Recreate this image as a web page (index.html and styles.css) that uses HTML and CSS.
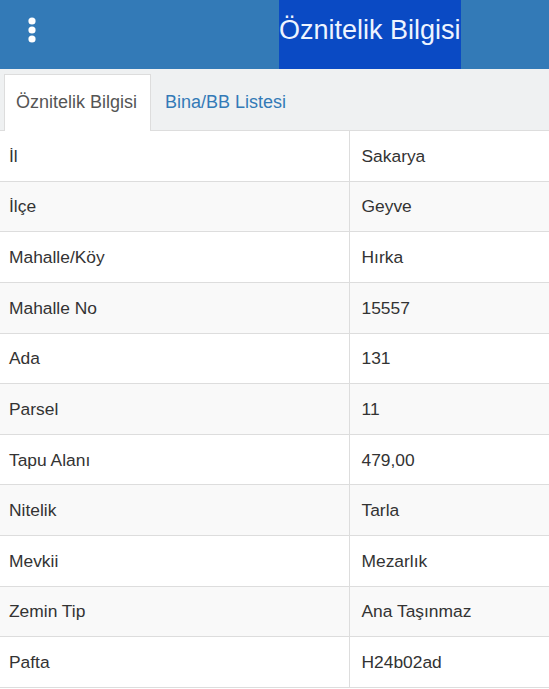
FILE: index.html
```html
<!DOCTYPE html>
<html lang="tr">
<head>
<meta charset="utf-8">
<title>Öznitelik Bilgisi</title>
<link rel="stylesheet" href="styles.css">
</head>
<body>
<header class="topbar">
  <button class="menu" aria-label="Menü">
    <svg width="10" height="28" viewBox="0 0 10 28">
      <circle cx="5" cy="5" r="3.6" fill="#fff"/>
      <circle cx="5" cy="14" r="3.6" fill="#fff"/>
      <circle cx="5" cy="23" r="3.6" fill="#fff"/>
    </svg>
  </button>
  <h1 class="title"><span class="title-hl">Öznitelik Bilgisi</span></h1>
</header>
<nav class="tabs">
  <a class="tab active">Öznitelik Bilgisi</a>
  <a class="tab">Bina/BB Listesi</a>
</nav>
<table class="attr">
  <tbody>
    <tr><td>İl</td><td>Sakarya</td></tr>
    <tr><td>İlçe</td><td>Geyve</td></tr>
    <tr><td>Mahalle/Köy</td><td>Hırka</td></tr>
    <tr><td>Mahalle No</td><td>15557</td></tr>
    <tr><td>Ada</td><td>131</td></tr>
    <tr><td>Parsel</td><td>11</td></tr>
    <tr><td>Tapu Alanı</td><td>479,00</td></tr>
    <tr><td>Nitelik</td><td>Tarla</td></tr>
    <tr><td>Mevkii</td><td>Mezarlık</td></tr>
    <tr><td>Zemin Tip</td><td>Ana Taşınmaz</td></tr>
    <tr><td>Pafta</td><td>H24b02ad</td></tr>
  </tbody>
</table>
</body>
</html>
```
FILE: styles.css
```css
* { box-sizing: border-box; }
html, body { margin: 0; padding: 0; }
body {
  font-family: "Liberation Sans", Arial, sans-serif;
  color: #333;
  background: #fff;
  width: 549px;
  overflow: hidden;
}
.topbar {
  height: 69px;
  background: #337ab7;
  display: flex;
  align-items: stretch;
}
.menu {
  border: 0;
  background: transparent;
  padding: 0;
  margin: 0 0 0 27px;
  width: 10px;
  display: flex;
  align-items: flex-start;
  padding-top: 16px;
  cursor: pointer;
}
.title {
  margin: 0 0 0 242px;
  font-size: 27px;
  font-weight: normal;
  display: flex;
}
.title-hl {
  display: block;
  background: #0a4ac4;
  color: #eef4ff;
  line-height: 61px;
  padding-bottom: 8px;
  white-space: nowrap;
}
.tabs {
  background: #eff1f2;
  display: flex;
  padding: 5px 0 0 4px;
  border-bottom: 1px solid #ddd;
  height: 62px;
}
.tab {
  font-size: 18px;
  line-height: 24px;
  padding: 15px 15px 16px 11px;
  color: #337ab7;
  border: 1px solid transparent;
  border-bottom: 0;
  margin-bottom: -1px;
  text-decoration: none;
  white-space: nowrap;
}
.tab.active {
  background: #fff;
  color: #555;
  border-color: #ddd;
  padding-right: 13px;
  margin-right: 2px;
}
.attr {
  width: 100%;
  border-collapse: collapse;
  table-layout: fixed;
  font-size: 17.4px;
  line-height: 24px;
}
.attr td {
  padding: 12.82px 8px 12.82px 9px;
  border-bottom: 1px solid #ddd;
  vertical-align: middle;
}
.attr td:first-child {
  width: 349px;
  border-right: 1px solid #ddd;
}
.attr td:last-child {
  padding-left: 12px;
}
.attr tr:nth-child(even) td { background: #f9f9f9; }
```
